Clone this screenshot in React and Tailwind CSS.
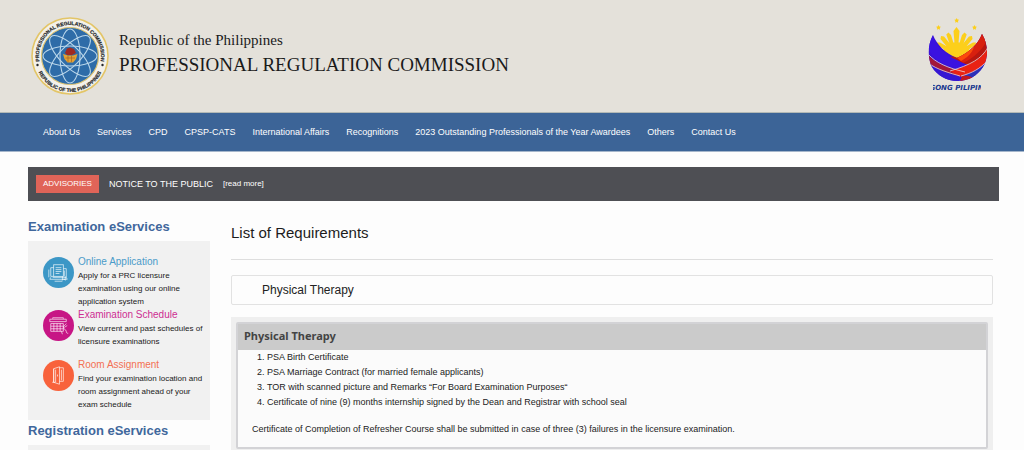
import React from "react";

const NAV = [
  "About Us",
  "Services",
  "CPD",
  "CPSP-CATS",
  "International Affairs",
  "Recognitions",
  "2023 Outstanding Professionals of the Year Awardees",
  "Others",
  "Contact Us",
];

function Seal() {
  return (
    <svg viewBox="0 0 80 80" className="size-20 shrink-0" role="img" aria-label="Professional Regulation Commission seal">
      <defs>
        <path id="seal-top" d="M11.900 53.100 A31 31 0 1 1 68.100 53.100" />
        <path id="seal-bottom" d="M5 41 A35 35 0 0 0 75 41" />
      </defs>
      <circle cx="40" cy="40" r="38" fill="#f3f1ea" stroke="#e3c567" strokeWidth="1.6" />
      <circle cx="40" cy="40" r="28.5" fill="#2e6ca8" stroke="#dcc271" strokeWidth="1.2" />
      <g fill="none" stroke="#b9d6ea" strokeWidth="1.1">
        <ellipse cx="40" cy="40" rx="27" ry="10" />
        <ellipse cx="40" cy="40" rx="27" ry="10" transform="rotate(45 40 40)" />
        <ellipse cx="40" cy="40" rx="27" ry="10" transform="rotate(90 40 40)" />
        <ellipse cx="40" cy="40" rx="27" ry="10" transform="rotate(135 40 40)" />
      </g>
      <path d="M35 37 L37 32.5 L40 31.5 L44 33 L46 37 L42 39 H37Z" fill="#a02a22" />
      <path d="M33 38 L38 39.5 H43 L47.5 38 L46 43 L43 46.5 H37.5 L34.500 43Z" fill="#e5a233" />
      <path d="M35.500 42 H45 M38 39.500 V46 M41.500 39.500 V46" stroke="#a8611f" strokeWidth="0.7" />
      <g fill="#26292b" stroke="#26292b" strokeWidth="0.2" fontFamily="'Liberation Sans', sans-serif" fontWeight="700" fontSize="5">
        <text textAnchor="middle">
          <textPath href="#seal-top" startOffset="50%">PROFESSIONAL REGULATION COMMISSION</textPath>
        </text>
        <text textAnchor="middle">
          <textPath href="#seal-bottom" startOffset="50%">REPUBLIC OF THE PHILIPPINES</textPath>
        </text>
      </g>
      <circle cx="7.500" cy="49" r="1.200" fill="#26292b" />
      <circle cx="72.500" cy="49" r="1.200" fill="#26292b" />
    </svg>
  );
}

function BagongPilipinas() {
  return (
    <svg viewBox="0 0 60 76" className="h-[76px] w-[60px] shrink-0" role="img" aria-label="Bagong Pilipinas">
      <defs>
        <clipPath id="bowl">
          <path d="M5 17 C9 27 17 35 29 40 C42 34 50 26 54 16 C61 28 60 41 55 49 C49 58 40 63 30 63 C18 63 9 57 4 49 C0 41 -1 28 5 17Z" />
        </clipPath>
        <clipPath id="wordmark">
          <rect x="5" y="66" width="48" height="6" />
        </clipPath>
      </defs>
      <g fill="#fccf1b">
        <path d="M28.700 0 l.8 1.500 1.600 .3 -1.100 1.200 .2 1.700 -1.500 -.7 -1.500 .7 .2 -1.700 -1.100 -1.200 1.600 -.3Z" />
        <path d="M10.500 7 l.8 1.500 1.600 .3 -1.100 1.200 .2 1.700 -1.500 -.7 -1.500 .7 .2 -1.700 -1.100 -1.200 1.600 -.3Z" />
        <path d="M46.500 7 l.8 1.500 1.600 .3 -1.100 1.200 .2 1.700 -1.500 -.7 -1.500 .7 .2 -1.700 -1.100 -1.200 1.600 -.3Z" />
        <path d="M26.500 25 L25.500 13 L28.500 9 L31.500 13 L30.500 25Z" />
        <path d="M22 27 L18.300 16.500 L20.500 14.500 L23 17 L25.500 25Z M35 27 L38.700 16.500 L36.500 14.500 L34 17 L31.500 25Z" />
        <path d="M20 30 L12.500 21 L13 18 L16 18.500 L23 27Z M37 30 L44.500 21 L44 18 L41 18.500 L34 27Z" />
        <path d="M17 32 L9.500 27 L9 24.500 L12 24.500 L20 29Z M40 32 L47.500 27 L48 24.500 L45 24.500 L37 29Z" />
        <path d="M14 36 A14.800 14.800 0 0 1 43 36 L29 43Z" />
      </g>
      <g clipPath="url(#bowl)">
        <rect width="60" height="66" fill="#3a12d6" />
        <path d="M0 37 C8 45 17 49 34 53 L27 58 C13 54 4 50 0 45Z" fill="#a3173a" />
        <path d="M60 10 V36 C52 45 42 49 34 51 C26 48 18 44 16 40 L28 38Z" fill="#b81710" />
        <path d="M53 10 C54 24 42 33 28 39 L35 45 C46 40 55 31 59 22Z" fill="#d8200f" />
        <path d="M46 22 C43 32 34 36 28 39 L33 43 C42 38 48 31 46 22Z" fill="#fb4a0c" />
        <path d="M3 12 C7 29 17 37 29 42 C37 46 42 48 48 49 L42 53 C24 50 5 44 0 30 V12Z" fill="#3a12e0" />
        <path d="M60 29 C54 42 42 47 22 53 L32 59 C46 54 56 49 60 40Z" fill="#e92213" />
        <path d="M60 42 C53 51 46 54 36 57 L43 62 H60Z" fill="#2c2fb8" />
        <path d="M0 44 C10 53 22 55 33 59 L30 64 H0Z" fill="#3516d2" />
        <path d="M34 58 C40 57 44 59 47 61 L31 66Z" fill="#c11620" />
        <path d="M0 36 C8 45 20 50 37 54 M60 29 C54 41 42 47 22 53 M0 45 C10 52 22 55 32 58 M60 42 C52 51 44 55 33 58" fill="none" stroke="#e6d6dc" strokeWidth="0.8" />
      </g>
      <text x="28.500" y="71.800" clipPath="url(#wordmark)" textAnchor="middle" fill="#19388f" fontFamily="DejaVu Sans, sans-serif" fontStyle="italic" fontWeight="700" fontSize="7">
        GONG PILIPIN
      </text>
    </svg>
  );
}

const GLYPHS = {
  form: (
    <>
      <rect x="11" y="8" width="10" height="12" />
      <path d="M13 11h6M13 13h6M13 15h6M13 17h4M11 11H8v9h3M21 12h3v9H10M6 13v8M8 21l-1 2h18l-1-2M22 14v6M12 25h8M20 20v4l1.500-1.500 1.500 1.500v-4" />
    </>
  ),
  calendar: (
    <>
      <path d="M10 9V8h11v1M7 12V9.500h17V12z" />
      <path d="M8 14h13v8H8zM8 16.700h13M8 19.400h13M11.200 14v8M14.500 14v8M17.700 14v8" />
      <path d="M24 14c-1 2-3 2-3 4s3 2 3 4 1 2 2 2M22 18l3-2M19 22l1 3" />
    </>
  ),
  door: (
    <>
      <path d="M11 9l6-2v18l-6-2zM17 8h4v14h-4M19 10v11M15 15v2M9.500 23h3M13 10v13M11 9v14" />
    </>
  ),
};

function ServiceItem({ glyph, circle, color, title, children, className }) {
  return (
    <li className={`flex gap-1 ${className}`}>
      <span className={`mt-0.5 flex size-[31px] shrink-0 rounded-full ${circle}`}>
        <svg viewBox="0 0 32 32" className="size-full" fill="none" stroke="#fff" strokeOpacity="0.75" strokeWidth="0.9" aria-hidden="true">
          {GLYPHS[glyph]}
        </svg>
      </span>
      <div>
        <a href="#" className={`block text-[10px] leading-[14px] ${color}`}>{title}</a>
        <p className="text-[8px] leading-[13px] text-[#1a1a1a]">{children}</p>
      </div>
    </li>
  );
}

export default function App() {
  return (
    <div className="flex min-h-screen flex-col bg-[#fdfdfd] font-['Liberation_Sans',Arial,sans-serif] text-[#222]">
      <header className="flex items-center justify-between border-b border-[#b3b9b6] bg-[#e4e1da] py-4 pr-9 pl-[30px]">
        <div className="flex items-center gap-[9px]">
          <Seal />
          <div className="pb-[6px] font-['Liberation_Serif',serif] text-[#1a1a1a]">
            <p className="text-[15px] leading-6">Republic of the Philippines</p>
            <h1 className="text-[19px] leading-[26px]">PROFESSIONAL REGULATION COMMISSION</h1>
          </div>
        </div>
        <BagongPilipinas />
      </header>

      <nav className="border-b border-[#a5b6cb] bg-[#3c6497]">
        <ul className="flex items-center gap-[17px] px-[43px] text-[9px] leading-[38px] text-white">
          {NAV.map((item) => (
            <li key={item}><a href="#">{item}</a></li>
          ))}
        </ul>
      </nav>

      <section className="mt-[15px] mr-[25px] ml-7 flex items-center bg-[#4e4f54] px-2 py-2 text-white">
        <span className="bg-[#e06458] px-[7px] text-[8px] leading-[18px]">ADVISORIES</span>
        <p className="ml-[10px] text-[9px] leading-[18px]">NOTICE TO THE PUBLIC</p>
        <a href="#" className="ml-[10px] text-[8px] leading-[18px]">[read more]</a>
      </section>

      <div className="flex grow gap-[21px] pr-[31px] pl-7">
        <aside className="flex w-[182px] shrink-0 flex-col pt-[18px]">
          <h2 className="text-[13px] leading-4 font-bold text-[#40679c]">Examination eServices</h2>
          <ul className="mt-[6px] bg-[#f1f1f1] pt-[14px] pr-1 pb-[9px] pl-[15px]">
            <ServiceItem glyph="form" circle="bg-[#3c97c6]" color="text-[#4a9bc9]" title="Online Application" className="">
              Apply for a PRC licensure examination using our online application system
            </ServiceItem>
            <ServiceItem glyph="calendar" circle="bg-[#c71585]" color="text-[#cd2d92]" title="Examination Schedule" className="pb-[10px]">
              View current and past schedules of licensure examinations
            </ServiceItem>
            <ServiceItem glyph="door" circle="bg-[#f8623c]" color="text-[#f37053]" title="Room Assignment" className="">
              Find your examination location and room assignment ahead of your exam schedule
            </ServiceItem>
          </ul>
          <h2 className="mt-[3px] text-[13px] leading-4 font-bold text-[#40679c]">Registration eServices</h2>
          <div className="mt-[6px] grow bg-[#f1f1f1]" />
        </aside>

        <main className="flex min-w-0 grow flex-col">
          <h2 className="border-b border-[#dedede] pt-[22px] pb-[16px] text-[15px] leading-5 text-[#1c1c1c]">List of Requirements</h2>
          <div className="mt-[15px] rounded-[2px] border border-[#e2e2e2] px-[30px] py-1 text-[12px] leading-5">Physical Therapy</div>
          <section className="mt-3 grow bg-[#efefef] px-[5px] pt-[5px]">
            <div className="rounded-[2px] border-2 border-[#d3d3d6] bg-[#fbfbfb]">
              <h3 className="bg-[#cbcbcb] px-[6px] pt-[2px] pb-1 font-['Noto_Sans',sans-serif] text-[11px] leading-5 font-bold text-[#444]">Physical Therapy</h3>
              <ol className="list-decimal pl-[29px] text-[9px] leading-[15px]">
                <li>PSA Birth Certificate</li>
                <li>PSA Marriage Contract (for married female applicants)</li>
                <li>TOR with scanned picture and Remarks “For Board Examination Purposes“</li>
                <li>Certificate of nine (9) months internship signed by the Dean and Registrar with school seal</li>
              </ol>
              <p className="mt-3 px-[14px] pb-[10px] text-[9px] leading-[15px]">
                Certificate of Completion of Refresher Course shall be submitted in case of three (3) failures in the licensure examination.
              </p>
            </div>
          </section>
        </main>
      </div>
    </div>
  );
}
